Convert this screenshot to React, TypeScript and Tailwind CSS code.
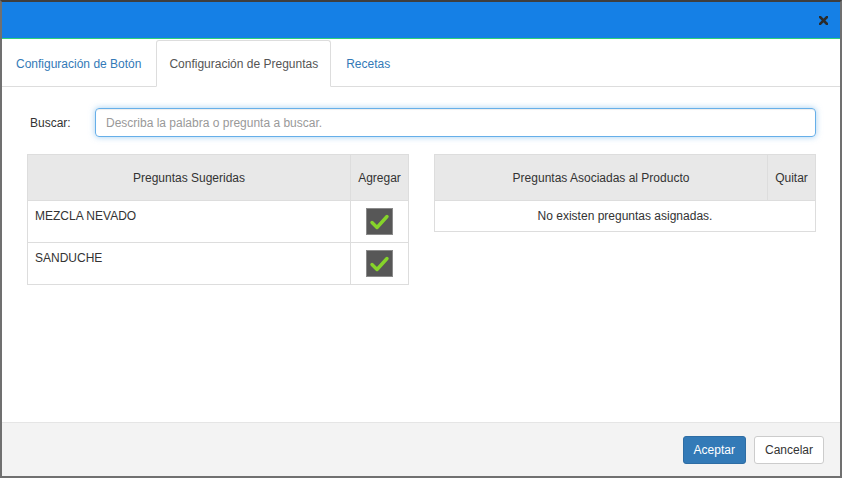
import React from "react";

function CheckBox() {
  return (
    <svg width="27" height="27" viewBox="0 0 27 27" className="block">
      <rect x="0.5" y="0.5" width="26" height="26" fill="#575757" stroke="#8a8a8a" />
      <path d="M6 14.5 L11 19.5 L21 8.5" fill="none" stroke="#86d42a" strokeWidth="3.4" strokeLinecap="round" strokeLinejoin="round" />
    </svg>
  );
}

export default function App() {
  const font = { fontFamily: "'Liberation Sans', Arial, sans-serif" };
  return (
    <div
      style={font}
      className="w-[842px] h-[478px] flex flex-col bg-white border-2 border-[#707070] border-t-[#3e3e3e] text-[12px] text-[#333]"
    >
      {/* header */}
      <div className="h-[37px] shrink-0 bg-[#1580e6] border-b border-[#2fd07a] flex items-center justify-end pr-[12px]">
        <svg width="9" height="9" viewBox="0 0 9 9">
          <path d="M1 1 L8 8 M8 1 L1 8" stroke="#2b2b2b" strokeWidth="2.6" strokeLinecap="square" />
        </svg>
      </div>

      {/* tabs */}
      <div className="h-[48px] shrink-0 border-b border-[#dddddd] flex items-end">
        <div className="h-[47px] -mb-px flex items-center px-[13px] border border-transparent mr-px text-[#337ab7]">
          Configuración de Botón
        </div>
        <div className="h-[47px] -mb-px flex items-center px-[12px] border border-[#dddddd] border-b-white bg-white text-[#555] rounded-t-[3px] mr-px">
          Configuración de Preguntas
        </div>
        <div className="h-[47px] -mb-px flex items-center px-[13px] border border-transparent text-[#337ab7]">
          Recetas
        </div>
      </div>

      {/* body */}
      <div className="flex-1 pl-[25px] pr-[24px] pt-[21px]">
        <div className="grid grid-cols-[68px_1fr] items-center">
          <label className="pl-[3px]">Buscar:</label>
          <input
            className="h-[29px] w-full rounded-[4px] border border-[#66afe9] px-[10px] outline-none text-[12px] text-[#555] placeholder:text-[#999] shadow-[inset_0_1px_1px_rgba(0,0,0,0.075),0_0_6px_rgba(102,175,233,0.6)]"
            placeholder="Describa la palabra o pregunta a buscar."
            style={font}
          />
        </div>

        <div className="grid grid-cols-2 gap-[25px] mt-[17px] items-start">
          <table className="w-full border-collapse border border-[#dddddd]">
            <thead>
              <tr className="bg-[#e8e8e8] h-[46px]">
                <th className="font-normal border border-[#dddddd] text-center">Preguntas Sugeridas</th>
                <th className="font-normal border border-[#dddddd] text-center w-[58px]">Agregar</th>
              </tr>
            </thead>
            <tbody>
              {["MEZCLA NEVADO", "SANDUCHE"].map((t) => (
                <tr key={t} className="h-[42px]">
                  <td className="border border-[#dddddd] align-top pl-[7px] pt-[6px]">{t}</td>
                  <td className="border border-[#dddddd] align-top pt-[7px]">
                    <div className="flex justify-center">
                      <CheckBox />
                    </div>
                  </td>
                </tr>
              ))}
            </tbody>
          </table>

          <table className="w-full border-collapse border border-[#dddddd]">
            <thead>
              <tr className="bg-[#e8e8e8] h-[46px]">
                <th className="font-normal border border-[#dddddd] text-center">Preguntas Asociadas al Producto</th>
                <th className="font-normal border border-[#dddddd] text-center w-[48px]">Quitar</th>
              </tr>
            </thead>
            <tbody>
              <tr className="h-[31px]">
                <td colSpan={2} className="border border-[#dddddd] text-center">
                  No existen preguntas asignadas.
                </td>
              </tr>
            </tbody>
          </table>
        </div>
      </div>

      {/* footer */}
      <div className="h-[54px] shrink-0 bg-[#f3f3f3] border-t border-[#e5e5e5] flex items-start justify-end pt-[13px] pr-[16px] gap-[8px]">
        <button className="h-[28px] px-[10px] rounded-[3px] bg-[#337ab7] border border-[#2e6da4] text-white text-[12px]" style={font}>
          Aceptar
        </button>
        <button className="h-[28px] px-[10px] rounded-[3px] bg-white border border-[#cccccc] text-[#333] text-[12px]" style={font}>
          Cancelar
        </button>
      </div>
    </div>
  );
}
